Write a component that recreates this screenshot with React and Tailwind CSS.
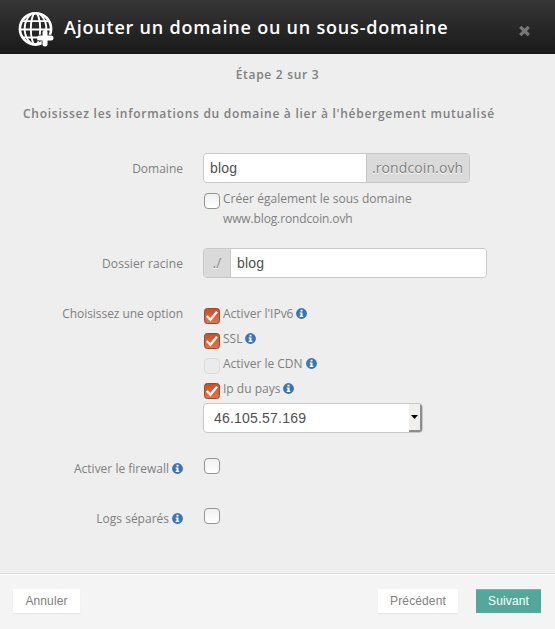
import React from "react";

function InfoIcon() {
  return (
    <svg className="h-[11px] w-[11px] shrink-0" viewBox="0 0 11 11">
      <circle cx="5.5" cy="5.5" r="5.4" fill="#3a74b4" />
      <path d="M4.5 1.8h2v1.6h-2zM3.6 4.4h2.9v3.4h.8v1.1H3.6V7.8h.9V5.5h-.9z" fill="#fff" />
    </svg>
  );
}

function Checkbox({ checked, disabled }) {
  if (checked) {
    return (
      <svg className="h-4 w-4 shrink-0" viewBox="0 0 16 16">
        <defs>
          <linearGradient id="orange" x1="0" y1="0" x2="0" y2="1">
            <stop offset="0" stopColor="#c94f22" />
            <stop offset="1" stopColor="#e9734b" />
          </linearGradient>
        </defs>
        <rect x=".5" y=".5" width="15" height="15" rx="2.8" fill="url(#orange)" stroke="#8d4c35" />
        <path d="M2.8 8l3.6 3.7 6.6-7.9" fill="none" stroke="#fff" strokeWidth="2.4" />
      </svg>
    );
  }
  return (
    <span
      className={
        disabled
          ? "h-4 w-4 shrink-0 rounded-[4px] border border-[#dcdcdc] bg-[#ebebeb]"
          : "h-4 w-4 shrink-0 rounded-[4px] border border-[#949494] bg-linear-to-b from-[#f1f1f1] to-white"
      }
    />
  );
}

function Option({ label, checked, disabled }) {
  return (
    <div className="flex h-[25px] items-start">
      <span className="ml-px mt-[5px] flex">
        <Checkbox checked={checked} disabled={disabled} />
      </span>
      <span className="ml-[3px] mt-px whitespace-nowrap leading-5">{label}</span>
      <span className="ml-[3px] mt-[5px] flex">
        <InfoIcon />
      </span>
    </div>
  );
}

function Label({ children }) {
  return (
    <div className="mr-5 mt-px flex w-[183px] shrink-0 items-start justify-end whitespace-nowrap leading-5">
      {children}
    </div>
  );
}

export default function App() {
  return (
    <div className="flex h-[629px] w-[555px] flex-col overflow-hidden bg-[#eeeeee] font-['Open_Sans',sans-serif] text-[12px] text-[#808080]">
      <header className="flex h-[54px] shrink-0 items-start bg-linear-to-b from-[#363636] to-[#1a1a1a] text-white">
        <svg className="ml-[18px] mt-[11px] h-9 w-9" viewBox="0 0 36 36" fill="none" stroke="#fff">
          <circle cx="17.5" cy="17.8" r="15.6" strokeWidth="2.6" />
          <ellipse cx="17.5" cy="17.8" rx="10.8" ry="15.7" strokeWidth="1.9" />
          <ellipse cx="17.5" cy="17.8" rx="4.7" ry="15.7" strokeWidth="1.9" />
          <path d="M4 10.2h27M2 18.5h31M4 26.5h27" strokeWidth="1.8" />
          <path d="M27 20v15M19.5 27h15" stroke="#252525" strokeWidth="6.6" />
          <path d="M27 21.4v11.6M21.4 27h11.6" strokeWidth="5" strokeLinecap="round" />
        </svg>
        <h1 className="ml-[10px] mt-[14px] whitespace-nowrap text-[18px] font-semibold leading-[26px] tracking-[0.79px]">
          Ajouter un domaine ou un sous-domaine
        </h1>
        <svg className="ml-auto mr-[25px] mt-[26px] h-[10px] w-[11px]" viewBox="0 0 11 10">
          <path d="M2.4 2l6.2 6M8.6 2L2.4 8" stroke="#777" strokeWidth="3.2" strokeLinecap="square" />
        </svg>
      </header>

      <main className="flex h-[519px] shrink-0 flex-col">
        <h2 className="mt-[11px] text-center text-[12px] font-semibold leading-5 tracking-[0.7px]">Étape 2 sur 3</h2>
        <h2 className="ml-[23px] mt-[19px] whitespace-nowrap text-[12px] font-semibold leading-5 tracking-[0.73px]">
          Choisissez les informations du domaine à lier à l'hébergement mutualisé
        </h2>

        <div className="mt-[29px] flex h-[95px]">
          <div className="mt-[5px] flex">
            <Label>Domaine</Label>
          </div>
          <div>
            <div className="flex h-[30px] w-[267px] overflow-hidden rounded-[4px] border border-[#c8c8c8] text-[14px] leading-7">
              <div className="w-[162px] bg-white pl-[6px] font-['Liberation_Sans',sans-serif] tracking-[0.15px] text-[#505050]">blog</div>
              <div className="flex-1 whitespace-nowrap border-l border-[#c8c8c8] bg-[#dadada] pl-[5px] tracking-[0.1px] [text-shadow:0_1px_0_white]">
                .rondcoin.ovh
              </div>
            </div>
            <div className="mt-[6px] flex items-start">
              <span className="ml-px mt-[4px] flex">
                <Checkbox />
              </span>
              <div className="ml-[3px] whitespace-nowrap leading-5">
                <span className="tracking-[0.03px]">Créer également le sous domaine</span>
                <br />
                <span className="tracking-[-0.13px]">www.blog.rondcoin.ovh</span>
              </div>
            </div>
          </div>
        </div>

        <div className="flex h-[55px]">
          <div className="mt-[5px] flex">
            <Label>
              <span className="tracking-[0.1px]">Dossier racine</span>
            </Label>
          </div>
          <div className="flex h-[30px] w-[284px] overflow-hidden rounded-[4px] border border-[#c8c8c8] text-[14px] leading-7">
            <div className="w-[27px] border-r border-[#c8c8c8] bg-[#dadada] text-center [text-shadow:0_1px_0_white]">./</div>
            <div className="flex-1 bg-white pl-[6px] font-['Liberation_Sans',sans-serif] tracking-[0.15px] text-[#505050]">blog</div>
          </div>
        </div>

        <div className="flex h-[155px]">
          <Label>
            <span className="tracking-[-0.05px]">Choisissez une option</span>
          </Label>
          <div>
            <Option label="Activer l'IPv6" checked />
            <Option label="SSL" checked />
            <Option label="Activer le CDN" disabled />
            <Option label="Ip du pays" checked />
            <div className="flex h-[30px] w-[220px] overflow-hidden rounded-[4px] border border-[#c8c8c8] bg-white font-['Liberation_Sans',sans-serif] text-[14px] leading-7 text-[#505050]">
              <span className="flex-1 pl-[10px] tracking-[0.2px]">46.105.57.169</span>
              <span className="flex w-[13px] items-center justify-center border-b-2 border-r-2 border-[#8d8d8d] bg-[#f0efee]">
                <svg className="h-1 w-[7px]" viewBox="0 0 7 4">
                  <path d="M0 0h7L3.5 4z" fill="#000" />
                </svg>
              </span>
            </div>
          </div>
        </div>

        <div className="flex h-[50px]">
          <Label>
            Activer le firewall
            <span className="ml-[3px] mt-[4px] flex">
              <InfoIcon />
            </span>
          </Label>
          <span className="ml-px flex">
            <Checkbox />
          </span>
        </div>
        <div className="flex h-[50px]">
          <Label>
            Logs séparés
            <span className="ml-[3px] mt-[4px] flex">
              <InfoIcon />
            </span>
          </Label>
          <span className="ml-px flex">
            <Checkbox />
          </span>
        </div>
      </main>

      <footer className="flex flex-1 items-start border-t border-[#dddddd] bg-[#f4f4f4] pt-[15px] font-['Liberation_Sans',sans-serif] text-[12px] leading-6 shadow-[inset_0_1px_0_white]">
        <button className="ml-[13px] h-6 w-[67px] bg-white pb-px tracking-[0.12px] shadow-[0_1px_1px_#e8e8e8]">Annuler</button>
        <button className="ml-auto h-6 w-20 bg-white tracking-[0.12px] shadow-[0_1px_1px_#e8e8e8]">Précédent</button>
        <button className="ml-[18px] mr-[14px] h-6 w-[65px] bg-[#54a89a] tracking-[0.12px] text-white shadow-[inset_0_1px_0_#74b8ad]">Suivant</button>
      </footer>
    </div>
  );
}
